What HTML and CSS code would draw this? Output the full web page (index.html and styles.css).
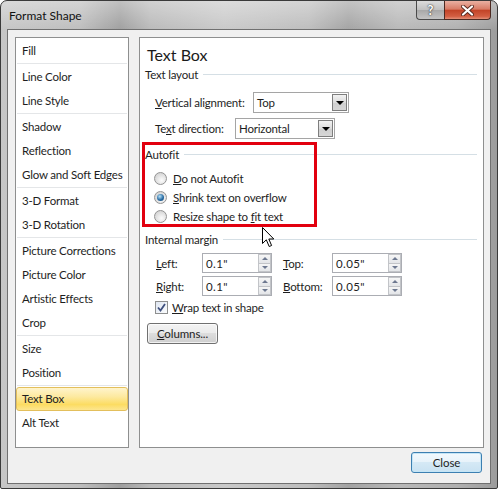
FILE: index.html
```html
<!DOCTYPE html>
<html>
<head>
    <title>Format Shape</title>
    <link rel="stylesheet" href="styles.css">
</head>
<body>
<div class="window">
    <div class="titlebar">
        <span class="title">Format Shape</span>
        <div class="caption">
            <span class="cap cap-help">?</span>
            <span class="cap cap-close">
                <svg width="13" height="11" viewBox="0 0 13 11">
                    <path d="M2 1.5 L11 9.5 M11 1.5 L2 9.5" stroke="#5a2a20" stroke-width="4" stroke-linecap="round"/>
                    <path d="M2 1.5 L11 9.5 M11 1.5 L2 9.5" stroke="#fff" stroke-width="2.2" stroke-linecap="round"/>
                </svg>
            </span>
        </div>
    </div>

    <div class="client">
        <div class="panels">
            <ul class="nav">
                <li>Fill</li>
                <li class="sep"></li>
                <li>Line Color</li>
                <li>Line Style</li>
                <li class="sep"></li>
                <li>Shadow</li>
                <li>Reflection</li>
                <li>Glow and Soft Edges</li>
                <li class="sep"></li>
                <li>3-D Format</li>
                <li>3-D Rotation</li>
                <li class="sep"></li>
                <li>Picture Corrections</li>
                <li>Picture Color</li>
                <li>Artistic Effects</li>
                <li>Crop</li>
                <li class="sep"></li>
                <li>Size</li>
                <li>Position</li>
                <li class="sep"></li>
                <li class="active">Text Box</li>
                <li>Alt Text</li>
            </ul>

            <div class="content">
                <h1>Text Box</h1>

                <div class="group-head"><span>Text layout</span><i></i></div>
                <div class="field-row">
                    <label class="lbl-valign"><u>V</u>ertical alignment:</label>
                    <div class="combo combo-valign"><span>Top</span><b></b></div>
                </div>
                <div class="field-row">
                    <label class="lbl-tdir">Te<u>x</u>t direction:</label>
                    <div class="combo combo-tdir"><span>Horizontal</span><b></b></div>
                </div>

                <div class="group-head head-autofit"><span>Autofit</span><i></i></div>
                <div class="radios">
                    <div class="radio-row"><span class="radio"></span><span><u>D</u>o not Autofit</span></div>
                    <div class="radio-row"><span class="radio on"></span><span><u>S</u>hrink text on overflow</span></div>
                    <div class="radio-row"><span class="radio"></span><span>Resize shape to <u>f</u>it text</span></div>
                </div>

                <div class="group-head head-margin"><span>Internal margin</span><i></i></div>
                <div class="margins">
                    <label><u>L</u>eft:</label>
                    <div class="spin"><span>0.1"</span><b><em></em><em class="dn"></em></b></div>
                    <label class="lbl-top"><u>T</u>op:</label>
                    <div class="spin"><span>0.05"</span><b><em></em><em class="dn"></em></b></div>
                    <label><u>R</u>ight:</label>
                    <div class="spin"><span>0.1"</span><b><em></em><em class="dn"></em></b></div>
                    <label class="lbl-top"><u>B</u>ottom:</label>
                    <div class="spin"><span>0.05"</span><b><em></em><em class="dn"></em></b></div>
                </div>

                <div class="check-row">
                    <span class="check">
                        <svg width="11" height="11" viewBox="0 0 11 11">
                            <path d="M2 5.5 L4.5 8.5 L9 2" fill="none" stroke="#3e4f7e" stroke-width="1.8"/>
                        </svg>
                    </span>
                    <span><u>W</u>rap text in shape</span>
                </div>

                <button class="btn btn-columns"><u>C</u>olumns...</button>

                <div class="callout"></div>
                <svg class="pointer" width="14" height="21" viewBox="0 0 14 21">
                    <path d="M0.5 0.5 L0.5 16.5 L4.3 12.8 L7.2 19.5 L9.6 18.5 L6.8 12 L11.8 12 Z" fill="#fff" stroke="#000" stroke-width="1"/>
                </svg>
            </div>
        </div>

        <div class="footer">
            <button class="btn btn-close">Close</button>
        </div>
    </div>
</div>
</body>
</html>
```

FILE: styles.css
```css
body{
    margin: 0;
    font-family: Lato, "Liberation Sans", sans-serif;
    font-size: 11.5px;
    letter-spacing: -0.2px;
    color: #1e1e1e;
    background: #fff;
}
ul{
    margin: 0;
    padding: 0;
    list-style: none;
}
u{
    text-decoration: underline;
    text-underline-offset: 1px;
}

/* window frame */
.window{
    width: 498px;
    height: 489px;
    box-sizing: border-box;
    border: 1px solid #3a3a3a;
    border-radius: 7px 7px 2px 2px;
    padding: 0 6px 4px 6px;
    display: flex;
    flex-direction: column;
    background:
        linear-gradient(to bottom, rgba(255,255,255,0.35), rgba(255,255,255,0) 30px),
        linear-gradient(to right, #c6c6c6 0%, #bdbdbd 16%, #9f9f9f 24%, #b9b9b9 30%, #c9c9c9 45%, #bdbdbd 62%, #a3a3a3 70%, #b8b8b8 80%, #b0b0b0 92%, #9c9c9c 100%);
}
.titlebar{
    height: 28px;
    display: flex;
    align-items: flex-start;
}
.title{
    padding: 7px 0 0 2px;
    color: #111;
    font-size: 12px;
    letter-spacing: 0;
}
.caption{
    margin-left: auto;
    display: flex;
}
.cap{
    height: 19px;
    display: flex;
    align-items: center;
    justify-content: center;
    border: 1px solid #4a4a4a;
    border-top: none;
    box-sizing: border-box;
}
.cap-help{
    width: 28px;
    border-right: none;
    border-radius: 0 0 0 4px;
    background: linear-gradient(#dcdcdc, #c0c0c0 50%, #a8a8a8 51%, #c4c4c4);
    color: #fff;
    font-weight: bold;
    font-size: 13px;
    text-shadow: 0 0 2px #333, 0 0 1px #333;
}
.cap-close{
    width: 47px;
    border-color: #4c2a22;
    border-radius: 0 0 4px 0;
    background: linear-gradient(#eab0a2, #d87c66 45%, #c34428 52%, #d35e42 85%, #e39078);
}

/* client area */
.client{
    flex: 1;
    border: 1px solid #707070;
    background: #f0f0f0;
    padding: 7px 6px 0 7px;
    display: flex;
    flex-direction: column;
}
.panels{
    height: 411px;
    display: flex;
    gap: 10px;
}

/* left list */
.nav{
    width: 114px;
    box-sizing: border-box;
    border: 1px solid #8e8f8f;
    background: #fff;
    padding-top: 1px;
}
.nav li{
    height: 24px;
    line-height: 24px;
    padding-left: 6px;
    box-sizing: border-box;
    white-space: nowrap;
}
.nav li.sep{
    height: 2px;
    padding: 0;
    margin: 0 1px;
    border-top: 1px solid #e4e6e8;
}
.nav li.active{
    border: 1px solid #e3bf5c;
    border-radius: 3px;
    padding-left: 5px;
    line-height: 22px;
    background: linear-gradient(#fff4cc, #fde99f 40%, #fcdc62 75%, #fde68f);
}

/* right panel */
.content{
    flex: 1;
    position: relative;
    border: 1px solid #8e8f8f;
    background: #fff;
    padding: 7px 6px 0 5px;
}
.content h1{
    margin: 0 0 1px 2px;
    font-size: 16px;
    font-weight: normal;
    letter-spacing: 0;
    line-height: 20px;
    color: #1a1a1a;
}
.group-head{
    display: flex;
    align-items: center;
    height: 16px;
}
.group-head i{
    flex: 1;
    height: 0;
    margin-left: 5px;
    margin-top: 1px;
    border-top: 1px solid #d5dfe5;
    border-bottom: 1px solid #fff;
}
.head-autofit{
    margin-top: 7px;
}
.head-margin{
    margin-top: 5px;
}

.field-row{
    display: flex;
    align-items: center;
    height: 21px;
    margin-top: 5px;
    padding-left: 10px;
}
.group-head + .field-row{
    margin-top: 10px;
}
.lbl-valign{
    width: 98px;
}
.lbl-tdir{
    width: 80px;
}
.combo{
    height: 21px;
    box-sizing: border-box;
    border: 1px solid #a5a5a5;
    background: #fff;
    display: flex;
    align-items: center;
    padding-left: 3px;
}
.combo span{
    flex: 1;
}
.combo b{
    width: 15px;
    height: 17px;
    margin-right: 1px;
    border: 1px solid #7e7e7e;
    box-sizing: border-box;
    background: linear-gradient(#f2f2f2, #dcdcdc 50%, #cfcfcf 51%, #d6d6d6);
    position: relative;
}
.combo b::after{
    content: "";
    position: absolute;
    left: 3px;
    top: 6px;
    border-left: 4px solid transparent;
    border-right: 4px solid transparent;
    border-top: 4px solid #000;
}
.combo-valign{
    width: 96px;
}
.combo-tdir{
    width: 100px;
}

.radios{
    margin-top: 7px;
    padding-left: 9px;
}
.radio-row{
    height: 19px;
    display: flex;
    align-items: center;
}
.radio{
    width: 13px;
    height: 13px;
    box-sizing: border-box;
    border-radius: 50%;
    border: 1px solid #939393;
    background: radial-gradient(circle at 60% 65%, #fcfcfc, #d8d8d8 70%);
    margin-right: 6px;
    position: relative;
}
.radio.on::after{
    content: "";
    position: absolute;
    left: 2px;
    top: 2px;
    width: 7px;
    height: 7px;
    border-radius: 50%;
    background: radial-gradient(circle at 40% 35%, #b9e3f9, #2b6ea5 55%, #123f6b);
}

.margins{
    margin-top: 6px;
    padding-left: 11px;
    display: grid;
    grid-template-columns: 46px 70px 60px 70px;
    grid-auto-rows: 20px;
    row-gap: 3px;
    align-items: center;
}
.margins .lbl-top{
    padding-left: 11px;
    white-space: nowrap;
}
.spin{
    height: 20px;
    box-sizing: border-box;
    border: 1px solid #abadb3;
    display: flex;
    align-items: center;
    padding-left: 3px;
    letter-spacing: 0.4px;
}
.spin span{
    flex: 1;
}
.spin b{
    width: 13px;
    height: 18px;
    display: flex;
    flex-direction: column;
}
.spin em{
    flex: 1;
    border: 1px solid #c2c4c8;
    background: linear-gradient(#f6f6f6, #e3e5e8);
    position: relative;
}
.spin em + em{
    border-top: none;
}
.spin em::after{
    content: "";
    position: absolute;
    left: 3px;
    top: 2px;
    border-left: 3px solid transparent;
    border-right: 3px solid transparent;
    border-bottom: 3px solid #6d7890;
}
.spin em.dn::after{
    top: 2px;
    border-bottom: none;
    border-top: 3px solid #6d7890;
}

.check-row{
    display: flex;
    align-items: center;
    height: 13px;
    margin-top: 5px;
    padding-left: 10px;
}
.check{
    width: 13px;
    height: 13px;
    box-sizing: border-box;
    border: 1px solid #8e8f8f;
    background: linear-gradient(135deg, #dfe6f2, #fbfcfd);
    margin-right: 4px;
    display: flex;
    align-items: center;
    justify-content: center;
}

.btn{
    font-family: inherit;
    font-size: 11.5px;
    letter-spacing: -0.1px;
    color: #1e1e1e;
    height: 21px;
    border-radius: 3px;
    border: 1px solid #707070;
    background: linear-gradient(#f3f3f3, #ebebeb 45%, #dddddd 50%, #cfcfcf);
    box-shadow: inset 0 0 0 1px rgba(255,255,255,0.7);
    padding: 0;
}
.btn-columns{
    display: block;
    width: 71px;
    margin: 9px 0 0 2px;
}
.footer{
    display: flex;
    justify-content: flex-end;
    padding: 4px 2px 0 0;
}
.btn-close{
    width: 71px;
    border-color: #3c7fb1;
    box-shadow: inset 0 0 0 1px #c4e5f6;
    background: linear-gradient(#f2f9fd, #e8f3fa 45%, #d5e9f5 50%, #c9e2f2);
}

/* annotation drawn over the dialog */
.callout{
    position: absolute;
    left: 2px;
    top: 104px;
    width: 175px;
    height: 85px;
    box-sizing: border-box;
    border: 3px solid #e2000f;
}
.pointer{
    position: absolute;
    left: 122px;
    top: 189px;
}
```
